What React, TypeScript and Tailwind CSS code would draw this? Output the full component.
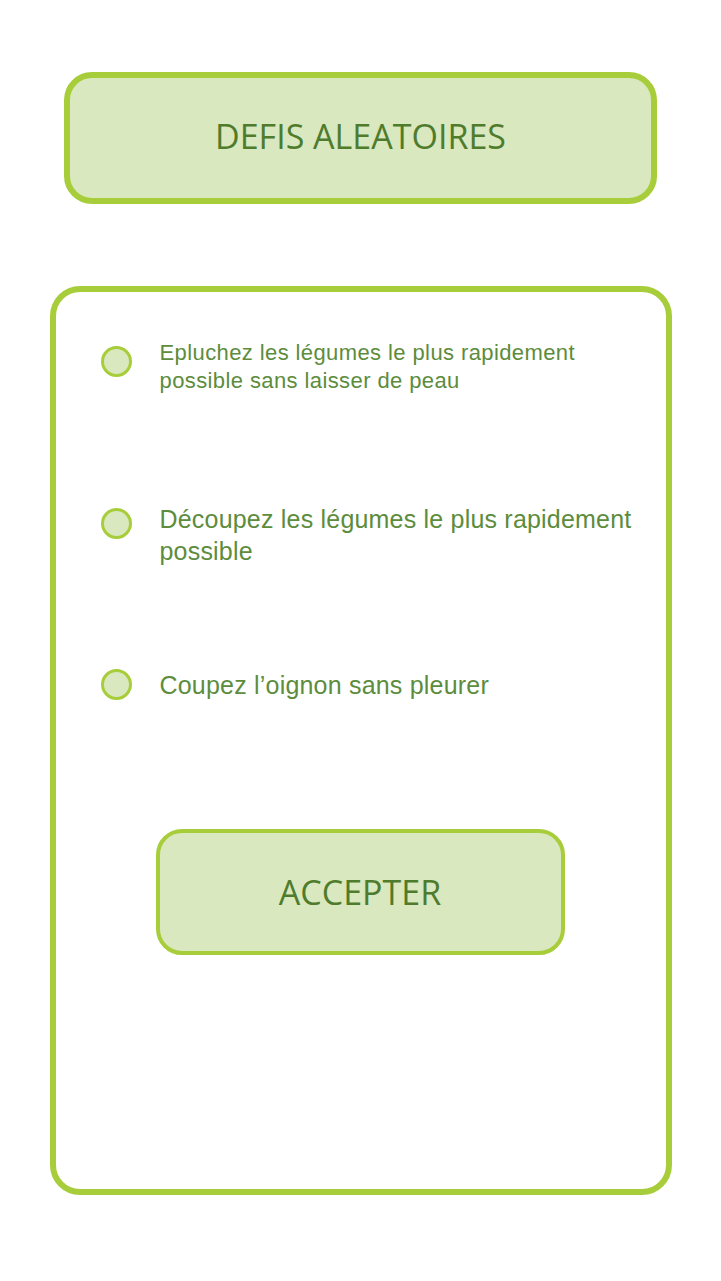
import React from 'react';

const challenges = [
  {
    text: 'Epluchez les légumes le plus rapidement possible sans laisser de peau',
    textClass: 'text-[22px] leading-[28px] tracking-[0.4px] w-[440px]',
    dotClass: 'mt-[7px]',
    gapClass: '',
  },
  {
    text: 'Découpez les légumes le plus rapidement possible',
    textClass: 'text-[25px] leading-[32px] tracking-[0.2px] w-[495px]',
    dotClass: 'mt-[5px]',
    gapClass: 'mt-[108px]',
  },
  {
    text: 'Coupez l’oignon sans pleurer',
    textClass: 'text-[25px] leading-[32px] tracking-[0.2px] w-[495px]',
    dotClass: 'mt-0',
    gapClass: 'mt-[102px]',
  },
];

const App = () => {
  return (
    <div className="min-h-screen bg-white pt-[72px] pb-[86px] font-['Liberation_Sans',sans-serif]">
      {/* Title */}
      <div className="mx-auto flex h-[132px] w-[593px] items-center justify-center rounded-[28px] border-[6px] border-[#a7cd3b] bg-[#d9e8bf] pb-[4px]">
        <span className="font-['Open_Sans',sans-serif] text-[34px] text-[#4f7b2d]">
          DEFIS ALEATOIRES
        </span>
      </div>

      {/* Challenges card */}
      <div className="mx-auto mt-[82px] flex h-[909px] w-[622px] flex-col rounded-[30px] border-[6px] border-[#a7cd3b] bg-white pt-[47px] pl-[45px]">
        {challenges.map((c, i) => (
          <div key={i} className={`flex items-start ${c.gapClass}`}>
            <div className={`h-[31px] w-[31px] shrink-0 rounded-full border-[3px] border-[#a7cd3b] bg-[#d9e8bf] ${c.dotClass}`} />
            <p className={`ml-[28px] text-[#5c8c3c] ${c.textClass}`}>{c.text}</p>
          </div>
        ))}

        <div className="mt-[128px] ml-[55px] flex h-[126px] w-[409px] items-center justify-center rounded-[26px] border-[4px] border-[#a7cd3b] bg-[#d9e8bf]">
          <span className="font-['Open_Sans',sans-serif] text-[34px] text-[#4f7b2d]">
            ACCEPTER
          </span>
        </div>
      </div>
    </div>
  );
};

export default App;
